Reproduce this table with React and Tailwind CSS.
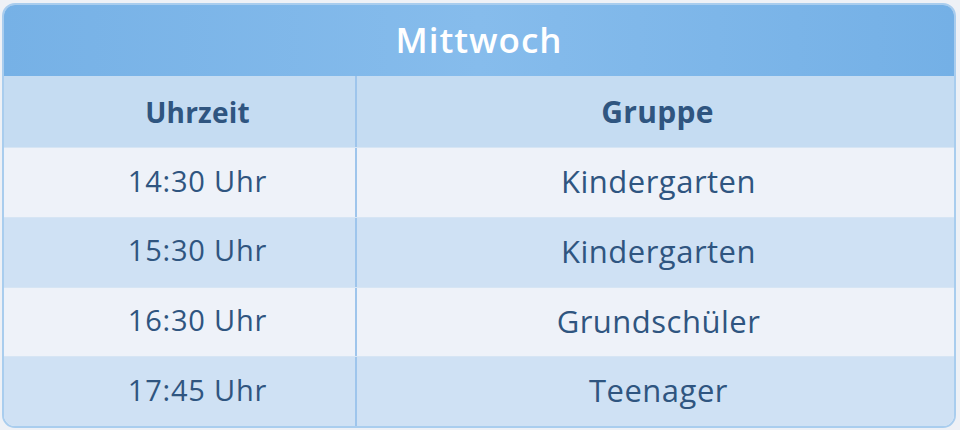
import React from "react";

const rows = [
  { time: "14:30 Uhr", group: "Kindergarten", light: true },
  { time: "15:30 Uhr", group: "Kindergarten", light: false },
  { time: "16:30 Uhr", group: "Grundschüler", light: true },
  { time: "17:45 Uhr", group: "Teenager", light: false },
];

export default function App() {
  return (
    <div className="w-[960px] h-[430px] bg-[#eef1f6] pt-[3px] pl-[2px] pr-[4px] pb-[2px]" style={{ fontFamily: '"Open Sans", "Noto Sans", sans-serif' }}>
      <div className="h-[425px] rounded-[13px] border-2 border-[#a9cdee] overflow-hidden flex flex-col bg-[#eef2f9]">
        <div className="h-[71px] shrink-0 flex items-center justify-center bg-gradient-to-r from-[#76b1e6] via-[#86bcec] to-[#74b0e6]">
          <span className="text-white font-semibold text-[35px] tracking-[1px] leading-none pb-[2px]">Mittwoch</span>
        </div>
        <div className="grid grid-cols-[353px_1fr] h-[71px] shrink-0 bg-[#c5dcf2]">
          <div className="flex items-center justify-center pl-[36px] border-r-2 border-[#9ec5ec] text-[#2f5580] font-bold text-[28px] tracking-[0.2px]">Uhrzeit</div>
          <div className="flex items-center justify-center pl-[4px] text-[#2f5580] font-bold text-[30px] tracking-[0.3px]">Gruppe</div>
        </div>
        {rows.map((r, i) => (
          <div
            key={i}
            className={
              "grid grid-cols-[353px_1fr] flex-1 border-t border-[#d6e5f4] " +
              (r.light ? "bg-[#eef2f9]" : "bg-[#cfe1f4]")
            }
          >
            <div className="flex items-center justify-center pl-[36px] pb-[4px] border-r-2 border-[#9ec5ec] text-[#2f5580] text-[29px] tracking-[0.8px]">{r.time}</div>
            <div className="flex items-center justify-center pl-[6px] pb-[2px] text-[#2f5580] text-[31px] tracking-[0.5px]">{r.group}</div>
          </div>
        ))}
      </div>
    </div>
  );
}
